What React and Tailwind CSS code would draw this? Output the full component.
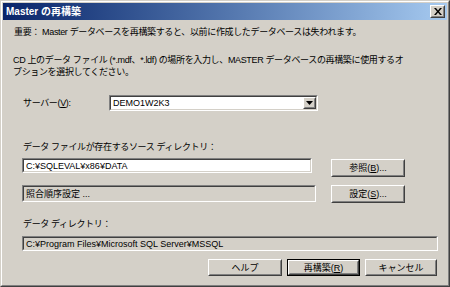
import React from "react";

const font = { fontFamily: '"Liberation Sans", "Noto Sans CJK JP", sans-serif' };

function Sunken({ className = "", children, white = true }) {
  return (
    <div className={`border border-t-[#808080] border-l-[#808080] border-b-white border-r-white ${className}`}>
      <div
        className={`h-full border border-t-[#404040] border-l-[#404040] border-b-[#d4d0c8] border-r-[#d4d0c8] ${
          white ? "bg-white" : "bg-[#d4d0c8]"
        } flex items-center pl-[2px] overflow-hidden whitespace-nowrap tracking-normal`}
      >
        {children}
      </div>
    </div>
  );
}

function Button({ children, className = "", primary = false }) {
  const inner = (
    <div className="h-full border border-t-white border-l-white border-b-[#404040] border-r-[#404040]">
      <div className="h-full flex items-center justify-center border border-t-[#d4d0c8] border-l-[#d4d0c8] border-b-[#808080] border-r-[#808080] bg-[#d4d0c8] tracking-normal">
        {children}
      </div>
    </div>
  );
  if (primary) {
    return <div className={`border border-black ${className}`}>{inner}</div>;
  }
  return <div className={className}>{inner}</div>;
}

export default function App() {
  return (
    <div className="w-[450px] h-[287px] bg-[#d4d0c8] text-[9px] text-black leading-[12px] tracking-[-0.35px]" style={font}>
      <div className="h-full border border-t-[#d4d0c8] border-l-[#d4d0c8] border-b-[#404040] border-r-[#404040]">
        <div className="h-full border border-t-white border-l-white border-b-[#808080] border-r-[#808080] p-px flex flex-col">
          <div className="h-[17px] flex items-center justify-between pl-[3px] pr-[2px] bg-gradient-to-r from-[#0a246a] to-[#a6caf0]">
            <span className="text-white font-bold text-[10px] tracking-normal">Master の再構築</span>
            <Button className="w-[15px] h-[13px]">
              <svg width="8" height="7" viewBox="0 0 8 7">
                <path d="M0 0h2l2 2.5L6 0h2L5 3.5 8 7H6L4 4.5 2 7H0l3-3.5z" fill="black" />
              </svg>
            </Button>
          </div>

          <div className="flex flex-col pl-[10px] pr-[7px]">
            <p className="mt-[6px] ml-[1px]">重要： Master データベースを再構築すると、以前に作成したデータベースは失われます。</p>
            <p className="mt-[16px]">
              CD 上のデータ ファイル (*.mdf、*.ldf) の場所を入力し、MASTER データベースの再構築に使用するオ
              <br />
              プションを選択してください。
            </p>

            <div className="mt-[17px] flex items-center">
              <span className="w-[96px] pl-[10px]">サーバー(<u>V</u>):</span>
              <Sunken className="w-[209px] h-[16px]">
                <span className="flex-1">DEMO1W2K3</span>
                <Button className="w-[13px] h-full">
                  <svg width="7" height="4" viewBox="0 0 7 4">
                    <path d="M0 0h7L3.5 4z" fill="black" />
                  </svg>
                </Button>
              </Sunken>
            </div>

            <p className="mt-[30px] pl-[10px]">データ ファイルが存在するソース ディレクトリ：</p>
            <div className="mt-[5px] flex items-start pl-[9px]">
              <Sunken className="w-[290px] h-[15px]">C:¥SQLEVAL¥x86¥DATA</Sunken>
              <Button className="w-[74px] h-[18px] ml-[19px] mt-px">
                参照(<u>B</u>)...
              </Button>
            </div>
            <div className="mt-[8px] flex items-start pl-[9px]">
              <Sunken className="w-[294px] h-[17px]" white={false}>
                照合順序設定 ...
              </Sunken>
              <Button className="w-[74px] h-[18px] ml-[15px]">
                設定(<u>S</u>)...
              </Button>
            </div>

            <p className="mt-[15px] pl-[10px]">データ ディレクトリ：</p>
            <div className="mt-[6px] pl-[9px]">
              <Sunken className="w-[416px] h-[15px]" white={false}>
                C:¥Program Files¥Microsoft SQL Server¥MSSQL
              </Sunken>
            </div>

            <div className="mt-[8px] flex justify-end gap-[5px] pr-[3px]">
              <Button className="w-[74px] h-[17px]">ヘルプ</Button>
              <Button primary className="w-[73px] h-[17px]">
                再構築(<u>R</u>)
              </Button>
              <Button className="w-[72px] h-[17px]">キャンセル</Button>
            </div>
          </div>
        </div>
      </div>
    </div>
  );
}
